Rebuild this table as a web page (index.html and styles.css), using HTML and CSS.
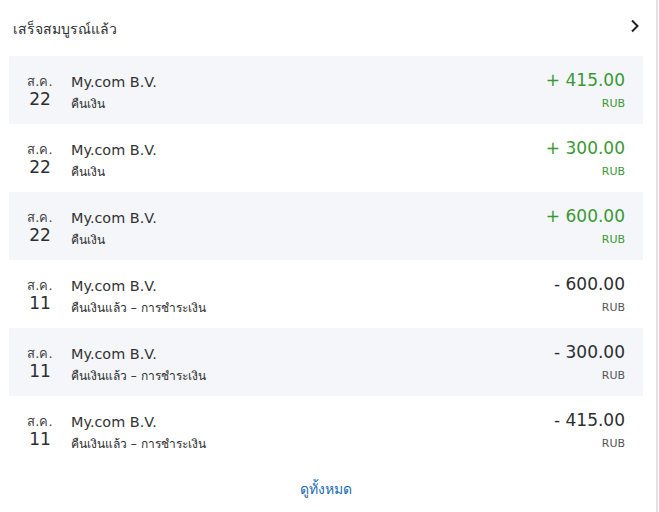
FILE: index.html
```html
<!DOCTYPE html>
<html lang="th">
<head>
<meta charset="utf-8">
<link rel="stylesheet" href="styles.css">
</head>
<body>
<div class="panel">
  <div class="head">
    <span class="title">เสร็จสมบูรณ์แล้ว</span>
    <svg class="chev" width="10" height="14" viewBox="0 0 10 14"><path d="M2 1.5 L7.5 7 L2 12.5" fill="none" stroke="#222" stroke-width="2"/></svg>
  </div>
  <div class="list">
    <div class="row shade">
      <div class="date"><span class="mon">ส.ค.</span><span class="day">22</span></div>
      <div class="info"><div class="name">My.com B.V.</div><div class="sub">คืนเงิน</div></div>
      <div class="amt pos"><div class="val">+ 415.00</div><div class="cur">RUB</div></div>
    </div>
    <div class="row">
      <div class="date"><span class="mon">ส.ค.</span><span class="day">22</span></div>
      <div class="info"><div class="name">My.com B.V.</div><div class="sub">คืนเงิน</div></div>
      <div class="amt pos"><div class="val">+ 300.00</div><div class="cur">RUB</div></div>
    </div>
    <div class="row shade">
      <div class="date"><span class="mon">ส.ค.</span><span class="day">22</span></div>
      <div class="info"><div class="name">My.com B.V.</div><div class="sub">คืนเงิน</div></div>
      <div class="amt pos"><div class="val">+ 600.00</div><div class="cur">RUB</div></div>
    </div>
    <div class="row">
      <div class="date"><span class="mon">ส.ค.</span><span class="day">11</span></div>
      <div class="info"><div class="name">My.com B.V.</div><div class="sub">คืนเงินแล้ว – การชำระเงิน</div></div>
      <div class="amt"><div class="val">- 600.00</div><div class="cur">RUB</div></div>
    </div>
    <div class="row shade">
      <div class="date"><span class="mon">ส.ค.</span><span class="day">11</span></div>
      <div class="info"><div class="name">My.com B.V.</div><div class="sub">คืนเงินแล้ว – การชำระเงิน</div></div>
      <div class="amt"><div class="val">- 300.00</div><div class="cur">RUB</div></div>
    </div>
    <div class="row">
      <div class="date"><span class="mon">ส.ค.</span><span class="day">11</span></div>
      <div class="info"><div class="name">My.com B.V.</div><div class="sub">คืนเงินแล้ว – การชำระเงิน</div></div>
      <div class="amt"><div class="val">- 415.00</div><div class="cur">RUB</div></div>
    </div>
  </div>
  <div class="more"><a href="#">ดูทั้งหมด</a></div>
</div>
</body>
</html>
```
FILE: styles.css
```css
html, body { margin: 0; padding: 0; background: #fff; }
body { font-family: "DejaVu Sans", Tahoma, "Noto Sans", sans-serif; color: #2c2e2f; }
.panel {
  width: 658px;
  height: 512px;
  border-right: 2px solid #e3e3e3;
  box-sizing: border-box;
}
.head {
  height: 56px;
  display: flex;
  align-items: center;
  justify-content: space-between;
  padding: 0 16px 0 13px;
  box-sizing: border-box;
}
.title { font-size: 14px; margin-top: 1px; }
.chev { margin-top: -4px; }
.list { margin: 0 13px 0 9px; }
.row {
  height: 68px;
  display: flex;
  align-items: flex-start;
  box-sizing: border-box;
  padding: 15px 18px 0 18px;
}
.row.shade { background: #f5f6fa; }
.date {
  width: 26px;
  margin-right: 18px;
  display: flex;
  flex-direction: column;
  align-items: center;
  line-height: 1;
}
.mon { font-size: 13px; color: #444; margin-top: 4px; }
.day { font-size: 17px; margin-top: 3px; color: #2c2e2f; }
.info { flex: 1; }
.name { font-size: 14.4px; line-height: 20px; margin-top: 1px; color: #333; }
.sub { font-size: 12px; line-height: 18px; margin-top: 3px; color: #2c2e2f; }
.amt { text-align: right; }
.val { font-size: 17px; line-height: 20px; margin-top: -1px; color: #2c2e2f; }
.cur { font-size: 11px; line-height: 16px; margin-top: 6px; color: #555; }
.amt.pos .val, .amt.pos .cur { color: #3a9936; }
.more { text-align: center; padding-top: 14px; padding-right: 4px; }
.more a { font-size: 14px; color: #1c6bb4; text-decoration: none; }
```
